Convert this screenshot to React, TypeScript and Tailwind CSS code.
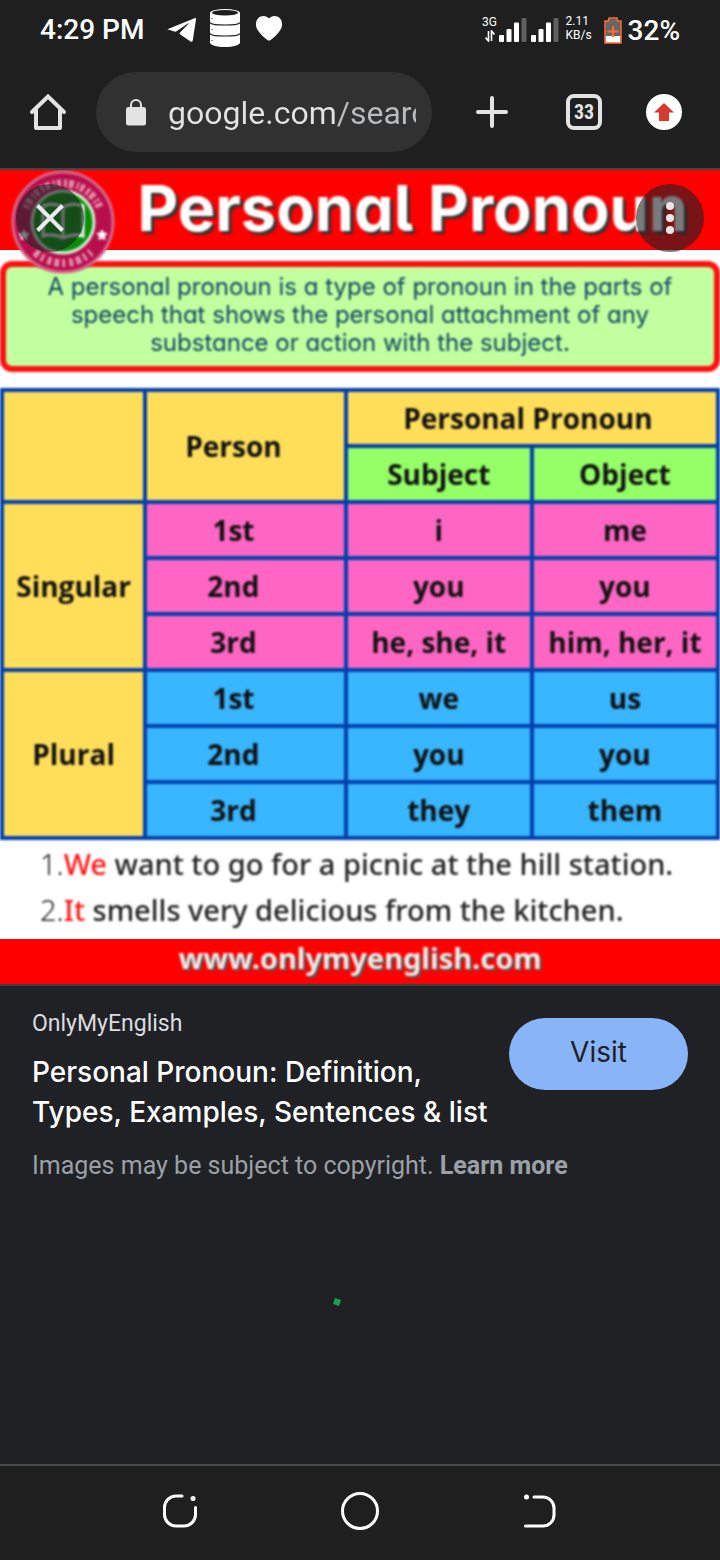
import React from "react";

type CellProps = { children?: React.ReactNode; tone: string; rowSpan?: number; colSpan?: number; pad?: string };

function HeadCell({ children, tone, rowSpan, colSpan, pad = "" }: CellProps) {
  return (
    <th rowSpan={rowSpan} colSpan={colSpan} className={`border-4 border-[#0040ae] p-0 text-center align-middle font-bold whitespace-nowrap ${tone} ${pad}`}>
      {children}
    </th>
  );
}

function Cell({ children, tone, pad = "" }: CellProps) {
  return <td className={`border-4 border-[#0040ae] p-0 text-center align-middle whitespace-nowrap ${tone} ${pad}`}>{children}</td>;
}

const yellow = "bg-[#ffde59]";
const green = "bg-[#94ff66]";

const groups = [
  {
    name: "Singular",
    tone: "bg-[#ff66c4]",
    rows: [
      ["1st", "i", "me"],
      ["2nd", "you", "you"],
      ["3rd", "he, she, it", "him, her, it"],
    ],
  },
  {
    name: "Plural",
    tone: "bg-[#38b6ff]",
    rows: [
      ["1st", "we", "us"],
      ["2nd", "you", "you"],
      ["3rd", "they", "them"],
    ],
  },
];

function Signal() {
  return (
    <svg viewBox="0 0 28 24" className="h-6 w-7" aria-hidden="true">
      <rect x="0" y="17" width="5" height="7" rx="1" fill="#fff" />
      <rect x="7.500" y="11" width="5" height="13" rx="1" fill="#fff" />
      <rect x="15" y="4.500" width="5" height="19.500" rx="1" fill="#fff" />
      <rect x="22.500" y="0" width="5" height="24" rx="1" fill="#606060" />
    </svg>
  );
}

function StatusBar() {
  return (
    <div className="flex h-[60px] items-center justify-between px-10">
      <div className="flex h-14 items-center">
        <span className="w-[127px] text-[28px] font-medium text-white">4:29 PM</span>
        <svg viewBox="0 0 30 26" className="h-[26px] w-[30px]" fill="#fff" aria-hidden="true">
          <path d="M1 12 27.500 1.200q1.800-.6 1.500 1.300l-3.200 20.800q-.5 2.400-2.600 1L13 17.200q-1-.8 0-1.800L21.500 6.800q.5-1-.7-.4L9.500 14.300q-1 .6-2 .2L1 12.600q-.8-.3 0-.6z" />
        </svg>
        <svg viewBox="0 0 30 38" className="mb-1 ml-[13px] h-[38px] w-[30px]" aria-hidden="true">
          <path d="M0 4v29.500c0 2.500 6.700 4.500 15 4.500s15-2 15-4.500V4z" fill="#fff" />
          <ellipse cx="15" cy="4" rx="15" ry="4" fill="#fff" />
          <ellipse cx="15" cy="3.700" rx="13" ry="2.800" fill="#1f1f1f" />
          <path d="M0 13.500c2 3.300 28 3.300 30 0M0 24.500c2 3.300 28 3.300 30 0" fill="none" stroke="#1f1f1f" strokeWidth="1.200" />
          <path d="M2 9v1M2 20v1M2 31v1" stroke="#1f1f1f" strokeWidth="1" />
        </svg>
        <svg viewBox="0 0 26 25" className="mb-1 ml-4 h-[25px] w-[26px]" fill="#fff" aria-hidden="true">
          <path d="M13 2.500C10.500-.6 5-.9 2 2.500c-3 3.500-2.400 8.500 0 12 2.500 3.700 6 7 9.400 9.500q1.600 1.100 3.200 0C18 21.500 21.500 18.200 24 14.500c2.400-3.500 3-8.500 0-12-3-3.400-8.500-3.100-11 0z" />
        </svg>
      </div>
      <div className="flex items-center text-white">
        <div className="flex w-4 flex-col items-center pb-1">
          <span className="text-xs leading-4">3G</span>
          <svg viewBox="0 0 10 12" className="h-3 w-[10px]" fill="none" stroke="#fff" strokeWidth="1.600" aria-hidden="true">
            <path d="M3.500 1v10L.5 7.500M6.500 11V1l3 3.500" />
          </svg>
        </div>
        <div className="ml-px flex gap-1">
          <Signal />
          <Signal />
        </div>
        <div className="ml-[7px] flex w-7 flex-col pb-1 text-xs leading-[14px]">
          <span>2.11</span>
          <span>KB/s</span>
        </div>
        <svg viewBox="0 0 18 27" className="ml-[10px] h-[27px] w-[18px]" aria-hidden="true">
          <path d="M1.500 4h3.500V1.500h8V4h3.500v21.500h-15z" fill="#666" />
          <path d="M1.500 19h15v7h-15z" fill="#fff" />
          <path d="M1 4h3.500L5 1h8l.5 3H17v22H1z" fill="none" stroke="#ff6d33" strokeWidth="1.500" />
          <path d="M9 9v11M3.500 14.500h11" stroke="#ff6d33" strokeWidth="2" />
        </svg>
        <span className="ml-[6px] pt-[2px] text-[28px] leading-8 font-medium">32%</span>
      </div>
    </div>
  );
}

function Toolbar() {
  return (
    <div className="flex items-center px-7 pt-3 pb-4">
      <button aria-label="Home" className="-mr-px h-10 w-10">
        <svg viewBox="0 0 40 40" className="h-10 w-10" fill="none" stroke="#e3e3e3" strokeWidth="4" strokeLinecap="round" aria-hidden="true">
          <path d="M4 20 20 4.500 36 20" strokeLinejoin="miter" />
          <path d="M8 18v18h24V18" strokeLinejoin="round" />
        </svg>
      </button>
      <div className="ml-[29px] flex h-20 min-w-0 flex-1 items-center rounded-full bg-[#313131] pr-4 pl-[30px]">
        <svg viewBox="0 0 20 27" className="h-[27px] w-5 shrink-0" aria-hidden="true">
          <rect y="8" width="20" height="18.500" rx="2.500" fill="#e3e3e3" />
          <path d="M5 9V6a5 5 0 0 1 10 0v3" fill="none" stroke="#e3e3e3" strokeWidth="2" />
        </svg>
        <input
          aria-label="Address"
          defaultValue="google.com/search"
          className="ml-[22px] h-12 w-full min-w-0 bg-[linear-gradient(to_right,#e3e3e3_167px,#b9bcbe_167px)] bg-clip-text pt-[2px] text-[32px] text-transparent outline-none"
        />
      </div>
      <button aria-label="New tab" className="ml-11 h-8 w-8">
        <svg viewBox="0 0 32 32" className="h-8 w-8" stroke="#e3e3e3" strokeWidth="4" strokeLinecap="round" aria-hidden="true">
          <path d="M16 2v28M2 16h28" />
        </svg>
      </button>
      <button className="ml-[58px] flex h-9 w-9 items-center justify-center rounded-lg border-4 border-[#e3e3e3] text-xl leading-5 font-bold text-[#e3e3e3] [font-family:'Roboto_Condensed',Roboto,sans-serif]">
        33
      </button>
      <button aria-label="Update available" className="mr-[10px] ml-11 h-9 w-9">
        <svg viewBox="0 0 36 36" className="h-9 w-9" aria-hidden="true">
          <circle cx="18" cy="18" r="18" fill="#fff" />
          <path d="M18 9 28 18.500h-5V27H13v-8.500H8z" fill="#d73b2f" />
        </svg>
      </button>
    </div>
  );
}

function Badge() {
  return (
    <svg viewBox="0 0 104 104" className="absolute top-0 left-[11px] z-10 h-[104px] w-[104px] blur-[1px]" aria-hidden="true">
      <circle cx="52" cy="52" r="50" fill="#b80f4c" stroke="#d4688c" strokeWidth="3" />
      <path d="M15 38a40 40 0 0 1 74 0" fill="none" stroke="#efb4c8" strokeWidth="8" strokeDasharray="3 2 5 3 2 2 4 3" opacity=".75" />
      <path d="M24 82a41 41 0 0 0 56 0" fill="none" stroke="#efb4c8" strokeWidth="8" strokeDasharray="5 3 3 4 4 3" opacity=".75" />
      <circle cx="52" cy="52" r="31" fill="#068f06" stroke="#d9efd9" strokeWidth="3" />
      <path d="M32 36q10-4 20 1 10-5 20-1v30q-10-3-20 2-10-5-20-2zM52 37v31" fill="none" stroke="#eee" strokeWidth="3" />
      <path d="m91 60 1.500 3 3.500.5-2.500 2.500.5 3.500-3-1.500-3 1.500.5-3.500-2.500-2.500 3.500-.5z" fill="#fff" stroke="#fff" />
      <path d="m13 60 1.500 3 3.500.5-2.500 2.500.5 3.500-3-1.500-3 1.500.5-3.500-2.500-2.500 3.500-.5z" fill="#fff" stroke="#fff" />
    </svg>
  );
}

function Poster() {
  return (
    <div className="relative bg-white">
      <div className="h-20 bg-[#ff0000] pr-8 text-right">
        <span className="block text-[63px] leading-[76px] font-bold whitespace-nowrap text-white blur-[1px] [font-family:Inter,sans-serif] [font-feature-settings:'cv11','cv05'] [text-shadow:3px_3px_2px_#333]">
          Personal Pronoun
        </span>
      </div>
      <Badge />
      <div className="mt-[11px] h-[111px] rounded-xl border-6 border-[#ff1010] bg-[#c1ff9f] pt-[6px] text-center text-2xl leading-7 whitespace-nowrap text-[#0f4562] blur-[1px] [font-family:Inter,sans-serif] [font-feature-settings:'cv11']">
        A personal pronoun is a type of pronoun in the parts of
        <br />
        speech that shows the personal attachment of any
        <br />
        substance or action with the subject.
      </div>
      <table className="mt-4 w-full table-fixed border-collapse text-[28px] leading-8 font-bold text-[#111] blur-[1px] [font-family:'Open_Sans',sans-serif]">
        <colgroup>
          <col className="w-[20%]" />
          <col className="w-[28%]" />
          <col className="w-[26%]" />
          <col className="w-[26%]" />
        </colgroup>
        <thead>
          <tr className="h-14">
            <HeadCell tone={yellow} rowSpan={2} />
            <HeadCell tone={yellow} rowSpan={2} pad="pr-6">Person</HeadCell>
            <HeadCell tone={yellow} colSpan={2} pad="pr-2">Personal Pronoun</HeadCell>
          </tr>
          <tr className="h-14">
            <HeadCell tone={green}>Subject</HeadCell>
            <HeadCell tone={green}>Object</HeadCell>
          </tr>
        </thead>
        <tbody>
          {groups.map((g) =>
            g.rows.map((r, i) => (
              <tr key={g.name + r[0]} className="h-14">
                {i === 0 && <HeadCell tone={yellow} rowSpan={3}>{g.name}</HeadCell>}
                <Cell tone={g.tone} pad="pr-6">{r[0]}</Cell>
                <Cell tone={g.tone}>{r[1]}</Cell>
                <Cell tone={g.tone}>{r[2]}</Cell>
              </tr>
            )),
          )}
        </tbody>
      </table>
      <div className="h-[99px] pt-px pl-10 text-[29px] leading-[46px] font-medium whitespace-nowrap text-[#222] blur-[1px] [font-family:'Noto_Sans',sans-serif]">
        <p><span className="font-light">1.</span><span className="text-[#ff1616]">We</span> want to go for a picnic at the hill station.</p>
        <p><span className="font-light">2.</span><span className="text-[#ff1616]">It</span> smells very delicious from the kitchen.</p>
      </div>
      <div className="h-[45px] bg-[#ff0000] text-center text-[29px] leading-[38px] font-bold text-[#f3e8e4] [font-family:'Noto_Sans',sans-serif] [text-shadow:2px_2px_1px_#555]">
        <span className="block blur-[1px]">www.onlymyenglish.com</span>
      </div>
    </div>
  );
}

export default function App() {
  return (
    <div className="flex min-h-screen flex-col bg-[#202125] [font-family:Roboto,sans-serif]">
      <header className="border-b-2 border-[#444] bg-[#1f1f1f]">
        <StatusBar />
        <Toolbar />
      </header>
      <main className="flex flex-1 flex-col">
        <section className="relative overflow-hidden border-b-2 border-[#3c4043]">
          <Poster />
          <button aria-label="Close" className="absolute top-[14px] left-4 z-20 flex h-[68px] w-[68px] items-center justify-center rounded-full bg-[#202124]/60">
            <svg viewBox="0 0 28 28" className="h-7 w-7" stroke="#e8eaed" strokeWidth="4" aria-hidden="true">
              <path d="m1.500 1.500 25 25M26.500 1.500l-25 25" />
            </svg>
          </button>
          <button aria-label="More options" className="absolute top-[14px] right-4 z-20 flex h-[68px] w-[68px] items-center justify-center rounded-full bg-[#202124]/60">
            <svg viewBox="0 0 8 32" className="h-8 w-2" fill="#ece4e6" aria-hidden="true">
              <circle cx="4" cy="4" r="4" />
              <circle cx="4" cy="16" r="4" />
              <circle cx="4" cy="28" r="4" />
            </svg>
          </button>
        </section>
        <section className="px-8 pt-6">
          <div className="flex items-start justify-between">
            <div>
              <p className="text-[23px] leading-7 text-[#dadce0]">OnlyMyEnglish</p>
              <h1 className="mt-[14px] text-[28px] leading-10 font-medium whitespace-nowrap text-white [font-family:Inter,sans-serif]">
                Personal Pronoun: Definition,
                <br />
                Types, Examples, Sentences &amp; list
              </h1>
            </div>
            <a href="#visit" className="mt-2 flex h-[72px] w-[179px] shrink-0 items-center justify-center rounded-full bg-[#8ab4f8] pb-1 text-[28px] text-[#202124] [font-family:Inter,sans-serif]">
              Visit
            </a>
          </div>
          <p className="mt-5 text-[25px] leading-7 text-[#9aa0a6]">
            Images may be subject to copyright. <a href="#learn" className="font-bold">Learn more</a>
          </p>
          <svg viewBox="0 0 8 8" className="mt-[118px] ml-[301px] h-2 w-2" aria-hidden="true">
            <path d="m2 0 6 2-2 6-6-2z" fill="#1e9e54" />
          </svg>
        </section>
      </main>
      <nav className="flex h-24 items-center justify-around border-t-2 border-[#474a49] bg-[#1f1f1f] px-[90px] pb-1">
        <button aria-label="Recent apps">
          <svg viewBox="0 0 36 36" className="h-9 w-9" fill="none" stroke="#fff" strokeWidth="3" strokeLinecap="round" aria-hidden="true">
            <path d="M21 3h-6A11.500 11.500 0 0 0 3.500 14.500v7A11.500 11.500 0 0 0 15 33h8a11.500 11.500 0 0 0 11.500-11.500V14.500" />
            <circle cx="32" cy="5.500" r="2.500" fill="#fff" stroke="none" />
          </svg>
        </button>
        <button aria-label="Home screen">
          <svg viewBox="0 0 40 40" className="h-10 w-10" fill="none" stroke="#fff" strokeWidth="3" aria-hidden="true">
            <circle cx="20" cy="20" r="17.500" />
          </svg>
        </button>
        <button aria-label="Back">
          <svg viewBox="0 0 36 36" className="h-9 w-9" fill="none" stroke="#fff" strokeWidth="3" strokeLinecap="round" aria-hidden="true">
            <path d="M11 4h9a11 11 0 0 1 11 11v7a11 11 0 0 1-11 11H2.500" />
            <circle cx="3.500" cy="4" r="2.500" fill="#fff" stroke="none" />
          </svg>
        </button>
      </nav>
    </div>
  );
}
